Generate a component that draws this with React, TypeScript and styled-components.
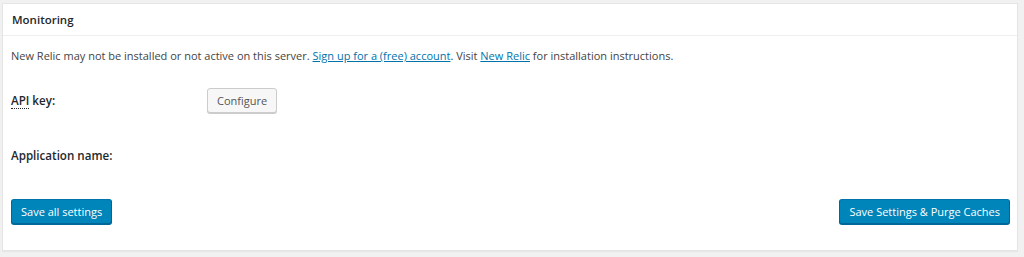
import React from 'react';
import styled, { createGlobalStyle } from 'styled-components';

const GlobalStyle = createGlobalStyle`
  body {
    margin: 0;
    background: #f1f1f1;
    font-family: "Open Sans", "Liberation Sans", sans-serif;
  }
`;

const Page = styled.div`
  padding: 3px 6px 6px 2px;
`;

const Postbox = styled.div`
  background: #fff;
  border: 1px solid #e5e5e5;
  box-shadow: 0 1px 1px rgba(0, 0, 0, 0.04);
  height: 246px;
  display: flex;
  flex-direction: column;
`;

const Header = styled.h3`
  margin: 0;
  height: 31px;
  border-bottom: 1px solid #eee;
  padding: 0 9px;
  display: flex;
  align-items: center;
  font-size: 11.5px;
  font-weight: 600;
  color: #23282d;
`;

const Inside = styled.div`
  padding: 0 7px 0 8px;
  flex: 1;
  display: flex;
  flex-direction: column;
`;

const Notice = styled.p`
  margin: 12px 0 0;
  font-size: 11px;
  line-height: 16px;
  color: #444;
`;

const Link = styled.a`
  color: #0073aa;
  text-decoration: underline;
`;

const FormTable = styled.div`
  display: flex;
  flex-direction: column;
  margin-top: 9px;
`;

const Row = styled.div`
  display: grid;
  grid-template-columns: 196px 1fr;
  align-items: center;
  height: 55px;
`;

const Label = styled.div`
  font-size: 11.6px;
  font-weight: 600;
  color: #23282d;
`;

const Abbr = styled.abbr`
  text-decoration: none;
  border-bottom: 1px dotted #23282d;
`;

const Button = styled.button<{ $primary?: boolean }>`
  font-family: inherit;
  font-size: 11px;
  height: 25px;
  padding: 0 9px;
  border-radius: 3px;
  cursor: pointer;
  background: ${p => (p.$primary ? '#0085ba' : '#f7f7f7')};
  border: 1px solid;
  border-color: ${p => (p.$primary ? '#0073aa #006799 #006799' : '#ccc')};
  color: ${p => (p.$primary ? '#fff' : '#555')};
  box-shadow: ${p => (p.$primary ? '0 1px 0 #006799' : '0 1px 0 #ccc')};
  justify-self: start;
`;

const Actions = styled.div`
  display: flex;
  justify-content: space-between;
  margin-top: 16px;
`;

export default function App() {
  return (
    <Page>
      <GlobalStyle />
      <Postbox>
        <Header>Monitoring</Header>
        <Inside>
          <Notice>
            New Relic may not be installed or not active on this server.{' '}
            <Link href="#">Sign up for a (free) account</Link>. Visit{' '}
            <Link href="#">New Relic</Link> for installation instructions.
          </Notice>
          <FormTable>
            <Row>
              <Label>
                <Abbr title="Application Programming Interface">API</Abbr> key:
              </Label>
              <Button>Configure</Button>
            </Row>
            <Row>
              <Label>Application name:</Label>
              <div />
            </Row>
          </FormTable>
          <Actions>
            <Button $primary>Save all settings</Button>
            <Button $primary>Save Settings &amp; Purge Caches</Button>
          </Actions>
        </Inside>
      </Postbox>
    </Page>
  );
}
